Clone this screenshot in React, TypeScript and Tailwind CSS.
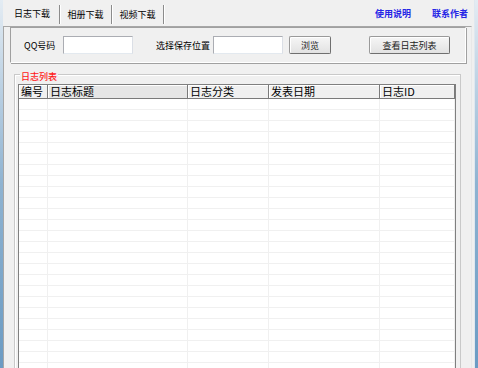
import React from 'react';

const columns = [
  { title: '编号', w: 'w-[29px]' },
  { title: '日志标题', w: 'w-[140px]' },
  { title: '日志分类', w: 'w-[81px]' },
  { title: '发表日期', w: 'w-[111px]' },
  { title: '日志ID', w: 'flex-1' },
];

const tabs = ['日志下载', '相册下载', '视频下载'];

function Button({ label, width }: { label: string; width: string }) {
  return (
    <button
      className={`${width} h-[18px] text-[9px] leading-none text-[#222] bg-gradient-to-b from-[#f6f6f6] to-[#e2e2e2] border border-[#9a9a9a] border-b-[#6f6f6f] border-r-[#6f6f6f] rounded-[2px] shadow-[inset_1px_1px_0_#ffffff]`}
    >
      {label}
    </button>
  );
}

function TextBox() {
  return (
    <div className="w-[70px] h-[18px] bg-white border border-[#abadb3] border-b-[#e3e9ef] border-r-[#dbdfe6]" />
  );
}

export default function App() {
  return (
    <div className="w-[478px] h-[368px] overflow-hidden flex bg-[#f0f0f0] font-['Noto_Sans_CJK_SC',sans-serif] text-black">
      {/* window frame (left) */}
      <div className="w-[3px] shrink-0 bg-gradient-to-b from-[#e4ecf3] via-[#8fb3d1] to-[#6b9bc3]" />

      <div className="flex-1 flex flex-col min-w-0 min-h-0">
        {/* Tab strip + links */}
        <div className="h-[26px] shrink-0 flex items-end pl-[2px] pr-[6px]">
          {tabs.map((t, i) => (
            <div
              key={t}
              className={`h-[19px] mb-[2px] flex items-center justify-center border-r border-[#8c8c8c] shadow-[1px_0_0_#ffffff] text-[9px] leading-none ${
                i === 0 ? 'w-[55px] pb-[2px]' : 'w-[52px]'
              }`}
            >
              {t}
            </div>
          ))}
          <div className="ml-auto self-start mt-[9px] flex gap-[21px] text-[9px] leading-none font-bold text-[#2424e6]">
            <span>使用说明</span>
            <span>联系作者</span>
          </div>
        </div>

        {/* Tab page */}
        <div className="flex-1 min-h-0 overflow-hidden mr-[2px] border border-[#a7a7a7] border-r-[#e8e8e8] border-b-0 flex flex-col pr-[5px] pl-[6px]">
          {/* settings panel */}
          <div className="h-[36px] shrink-0 border border-[#a0a0a0] border-r-white border-b-white shadow-[1px_1px_0_#a0a0a0] flex items-center text-[9px] leading-none">
            <span className="ml-[13px] w-[39px]">QQ号码</span>
            <TextBox />
            <span className="ml-[23px] w-[57px]">选择保存位置</span>
            <TextBox />
            <div className="ml-[6px]">
              <Button label="浏览" width="w-[42px]" />
            </div>
            <div className="ml-[38px]">
              <Button label="查看日志列表" width="w-[81px]" />
            </div>
          </div>

          {/* group box */}
          <div className="relative flex-1 min-h-0 mt-[11px] ml-[4px] mr-[5px] border border-[#c9c9c9] border-b-0 shadow-[inset_1px_1px_0_#ffffff] pt-[9px] pl-[3px] pr-[4px] flex flex-col">
            <span className="absolute -top-[3px] left-[5px] px-[1px] bg-[#f0f0f0] text-[9px] leading-none font-medium text-[#ff1a1a]">
              日志列表
            </span>

            {/* list view */}
            <div className="flex-1 min-h-0 bg-white border border-[#7f7f7f] border-b-0 flex flex-col overflow-hidden">
              <div className="h-[14px] shrink-0 flex bg-[#f0f0f0] border-b border-[#7a7a7a]">
                {columns.map((c, i) => (
                  <div
                    key={c.title}
                    className={`${c.w} h-full flex items-center pl-[2px] text-[11px] leading-none whitespace-nowrap border-r border-[#7a7a7a] shadow-[inset_1px_1px_0_#ffffff] ${
                      i === 1 ? 'bg-[#e6e6e6]' : ''
                    }`}
                  >
                    {c.title}
                  </div>
                ))}
              </div>
              {Array.from({ length: 26 }).map((_, r) => (
                <div key={r} className="h-[11px] shrink-0 flex border-b border-[#f0f0f0]">
                  {columns.map((c) => (
                    <div key={c.title} className={`${c.w} h-full border-r border-[#f0f0f0]`} />
                  ))}
                </div>
              ))}
            </div>
          </div>
        </div>
      </div>

      {/* window frame (right) */}
      <div className="w-[4px] shrink-0 border-l border-[#dfe8f0] bg-gradient-to-b from-[#e4ecf3] via-[#8fb3d1] to-[#6b9bc3]" />
    </div>
  );
}
